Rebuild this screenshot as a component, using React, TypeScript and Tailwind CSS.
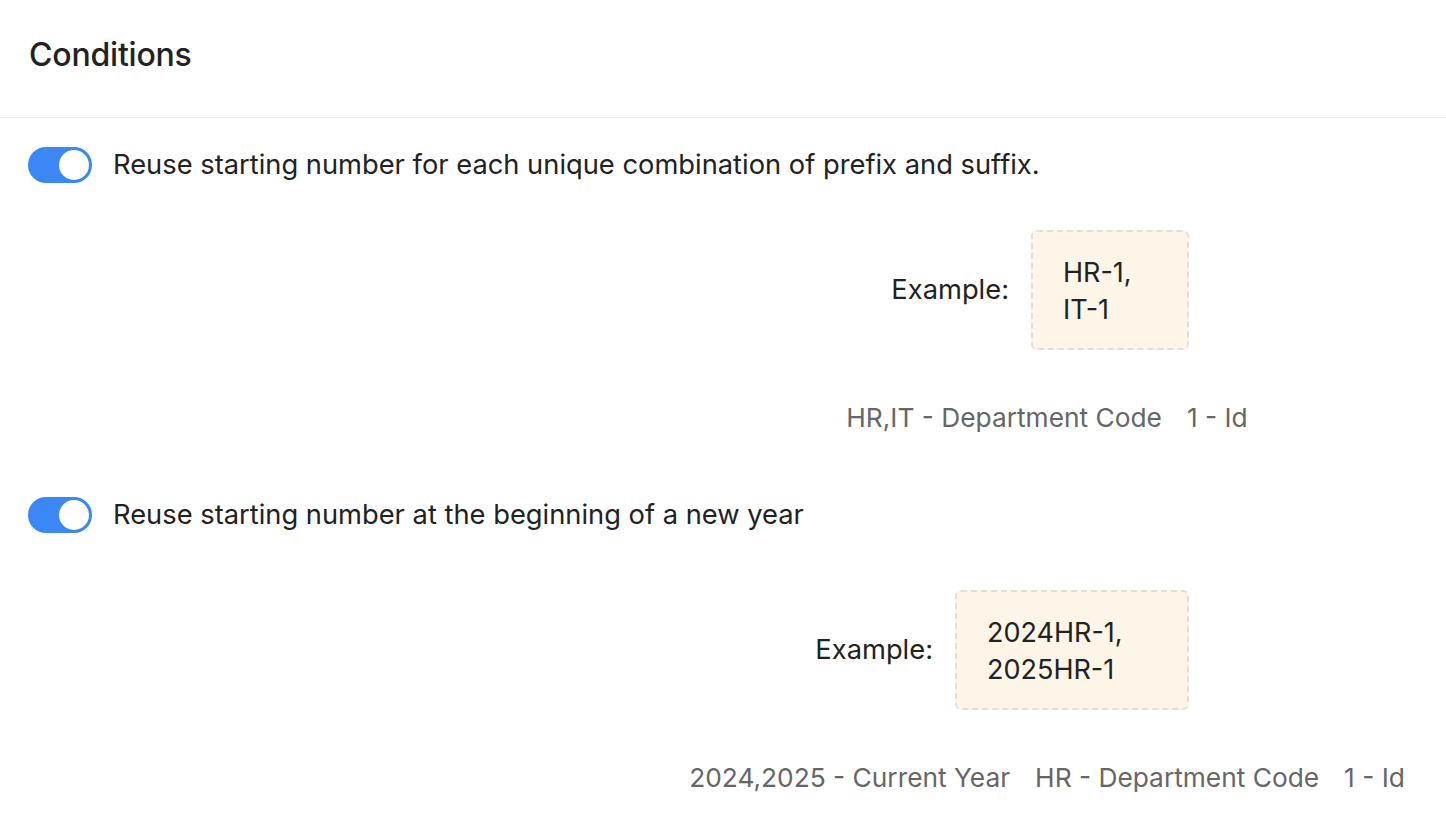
import React from "react";

function Toggle() {
  return (
    <div className="w-[64px] h-[36px] rounded-full bg-[#3b87f5] flex items-center justify-end pr-[3px] shrink-0">
      <div className="w-[30px] h-[30px] rounded-full bg-white" />
    </div>
  );
}

function Condition({
  label,
  lines,
  boxW,
  legend,
  boxTop,
}: {
  label: string;
  lines: string[];
  boxW: string;
  legend: string[];
  boxTop: string;
}) {
  return (
    <div className="flex flex-col">
      <div className="flex items-center gap-[21px] pl-[28px] h-[36px]">
        <Toggle />
        <span className="text-[27.3px] text-[#222]">{label}</span>
      </div>
      <div className={`flex justify-end items-center pr-[257px] ${boxTop} gap-[22px]`}>
        <span className="text-[27.3px] text-[#222]">Example:</span>
        <div
          className={`${boxW} h-[120px] rounded-[6px] border-2 border-dashed border-[#e2dfda] bg-[#fdf6e8] pl-[30px] pt-[22px] text-[27px] leading-[37px] text-[#222]`}
        >
          {lines.map((l) => (
            <div key={l}>{l}</div>
          ))}
        </div>
      </div>
      <div className="pl-[648px] flex justify-center gap-[25px] mt-[50px] text-[26.3px] text-[#666] leading-[36px]">
        {legend.map((l) => (
          <span key={l}>{l}</span>
        ))}
      </div>
    </div>
  );
}

export default function App() {
  return (
    <div
      className="w-[1446px] h-[834px] bg-white overflow-hidden"
      style={{ fontFamily: "Inter, 'Noto Sans', sans-serif" }}
    >
      <div className="h-[118px] border-b border-[#efefef] flex items-center pl-[29px] pb-[7px]">
        <h1 className="text-[32px] font-medium text-[#222] tracking-[-0.2px]">Conditions</h1>
      </div>
      <div className="pt-[29px]">
        <Condition
          label="Reuse starting number for each unique combination of prefix and suffix."
          lines={["HR-1,", "IT-1"]}
          boxW="w-[158px]"
          legend={["HR,IT - Department Code", "1 - Id"]}
          boxTop="mt-[47px]"
        />
        <div className="mt-[61px]">
          <Condition
            label="Reuse starting number at the beginning of a new year"
            lines={["2024HR-1,", "2025HR-1"]}
            boxW="w-[234px]"
            legend={["2024,2025 - Current Year", "HR - Department Code", "1 - Id"]}
            boxTop="mt-[57px]"
          />
        </div>
      </div>
    </div>
  );
}
